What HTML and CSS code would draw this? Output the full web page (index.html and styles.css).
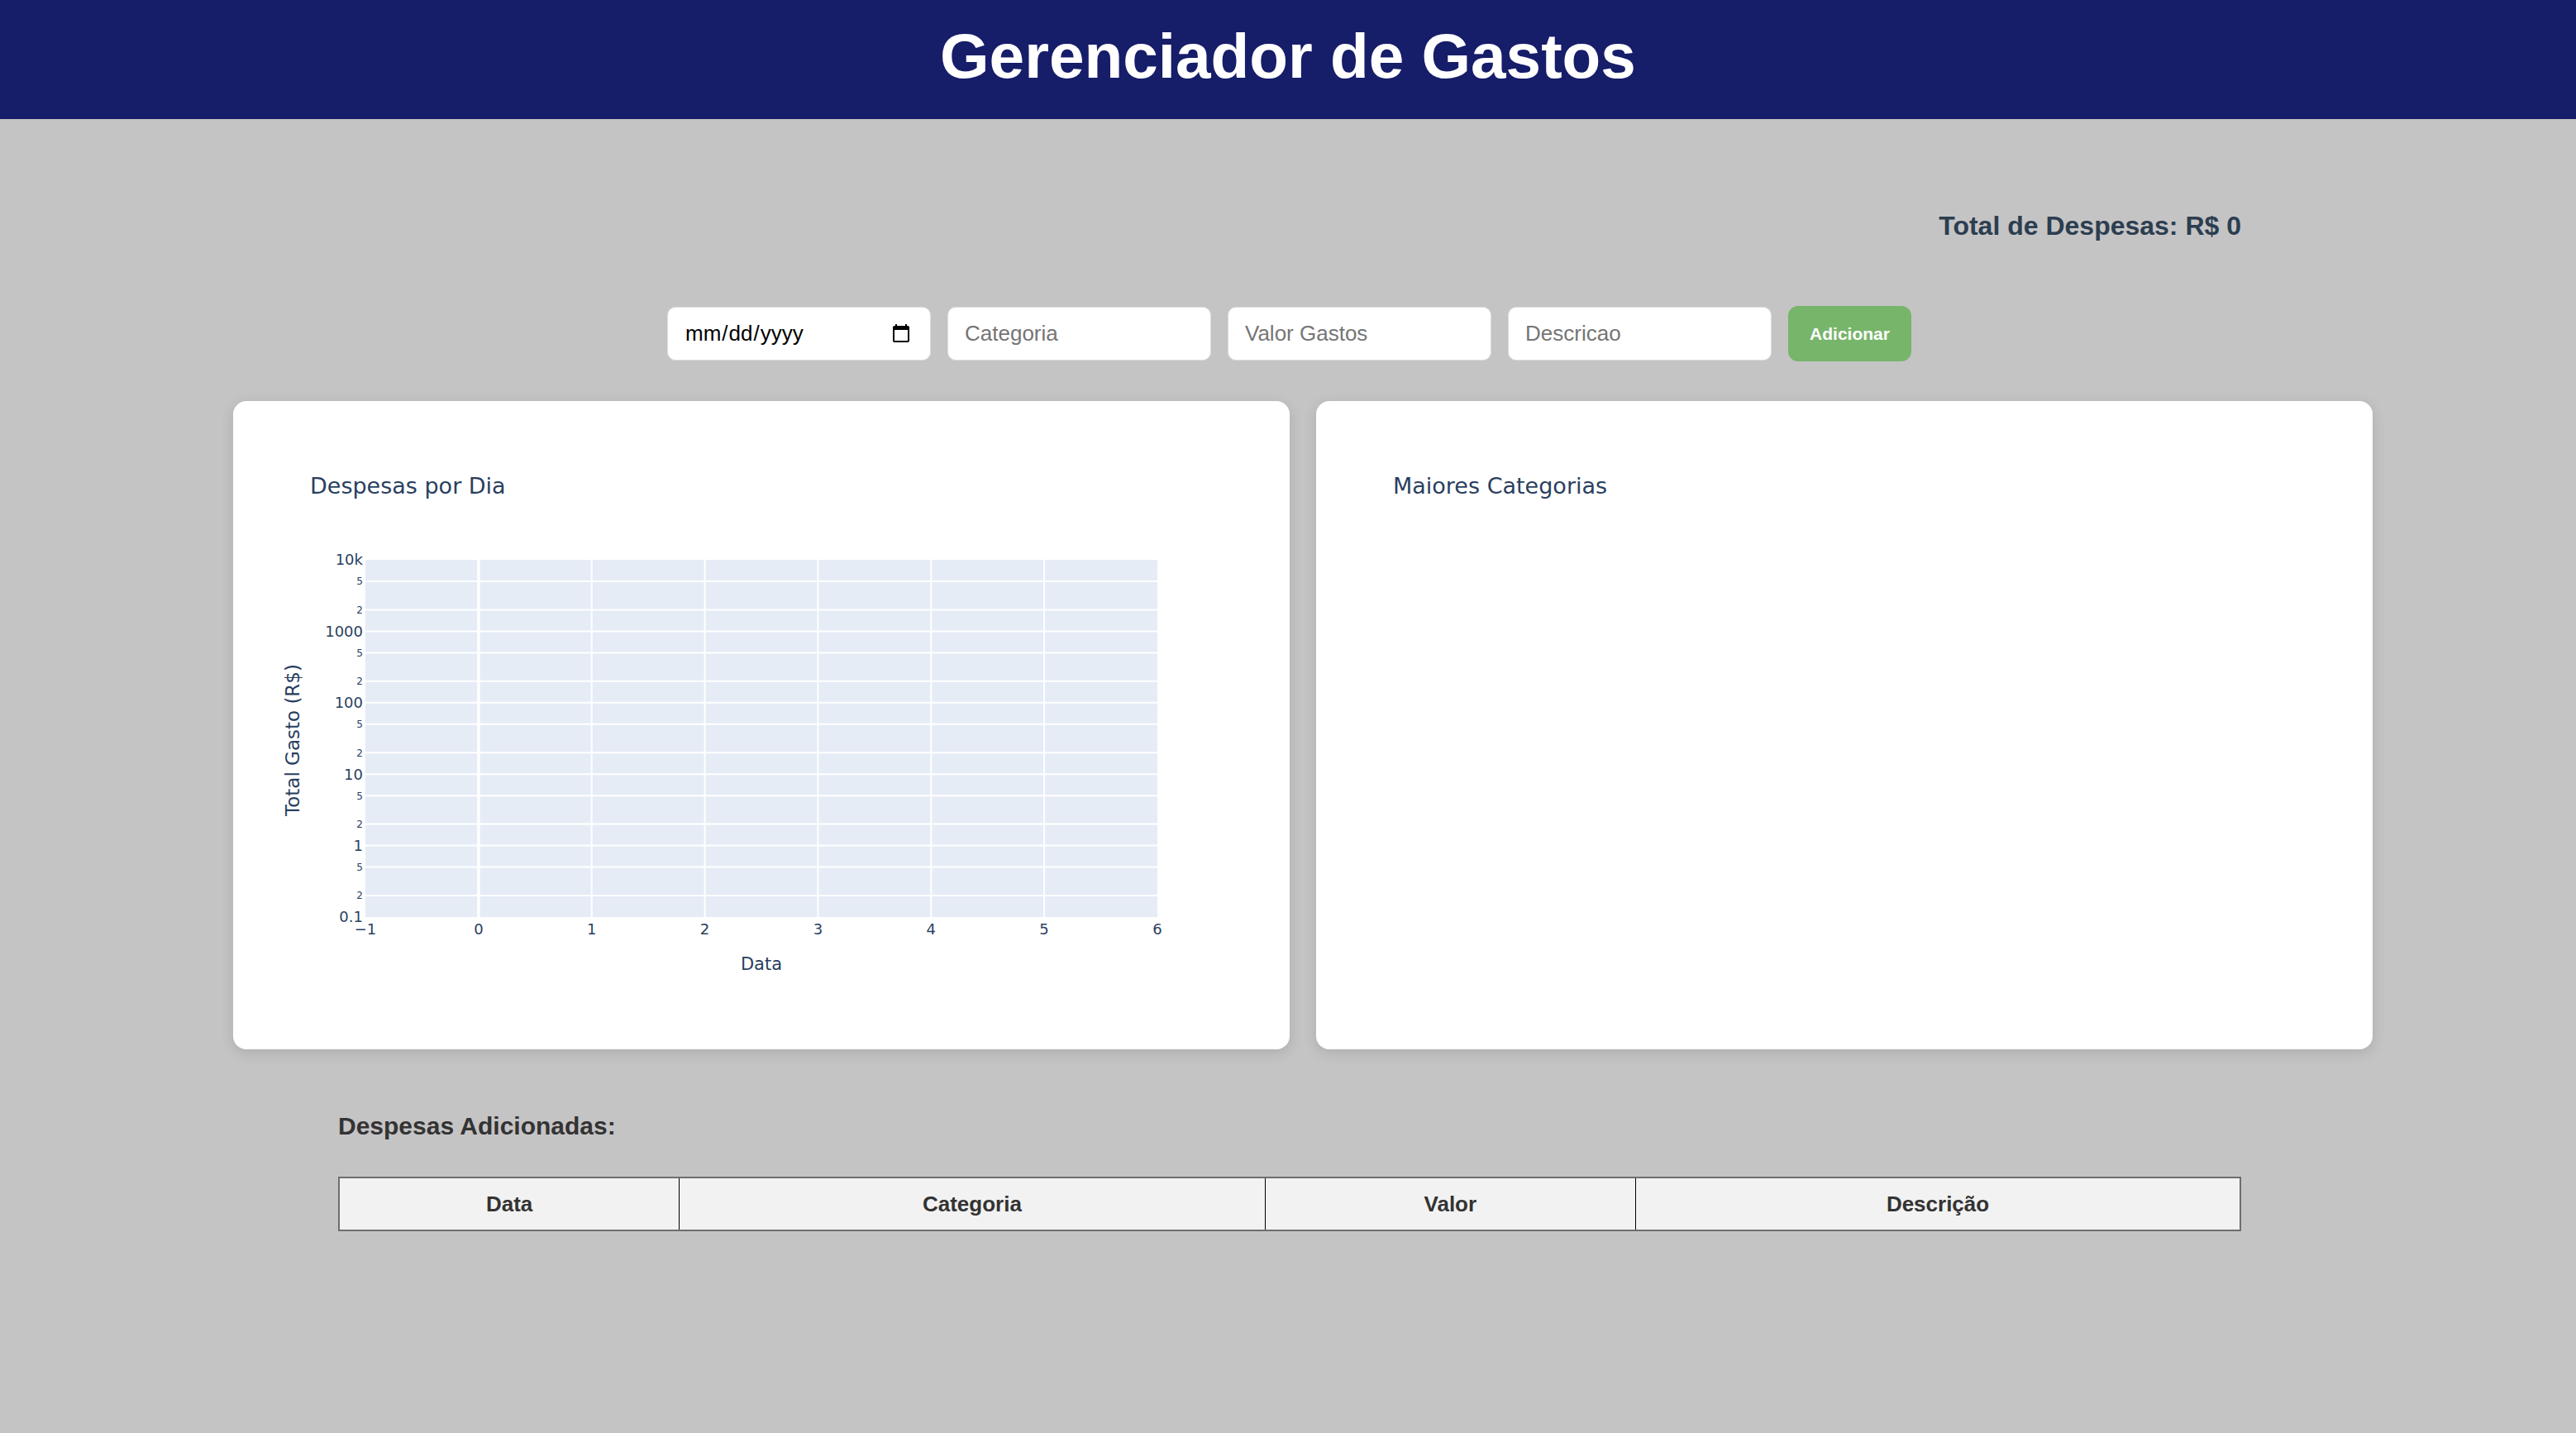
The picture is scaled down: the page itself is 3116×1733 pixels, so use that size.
FILE: index.html
```html
<!DOCTYPE html>
<html lang="pt-BR">
<head>
<meta charset="utf-8">
<title>Gerenciador de Gastos</title>
<link rel="stylesheet" href="styles.css">
</head>
<body>
<header class="app-header">
  <h1 class="app-title">Gerenciador de Gastos</h1>
</header>

<main>
  <div class="content summary">
    <p class="total">Total de Despesas: R$ <span class="total-value">0</span></p>
  </div>

  <form class="expense-form">
    <input class="field" type="date">
    <input class="field" type="text" placeholder="Categoria">
    <input class="field" type="text" placeholder="Valor Gastos">
    <input class="field" type="text" placeholder="Descricao">
    <button class="add-btn" type="button">Adicionar</button>
  </form>

  <section class="charts">
    <div class="card">
      <svg class="plot" viewBox="0 0 1278 784" width="1278" height="784">
        <text class="plot-title" x="93" y="112">Despesas por Dia</text>
        <rect x="160" y="192" width="958" height="432" fill="#e5ecf6"/>
        <g stroke="#fff" stroke-width="2">
          <line x1="160" x2="1118" y1="598" y2="598"/>
          <line x1="160" x2="1118" y1="563.6" y2="563.6"/>
          <line x1="160" x2="1118" y1="537.6" y2="537.6"/>
          <line x1="160" x2="1118" y1="511.6" y2="511.6"/>
          <line x1="160" x2="1118" y1="477.2" y2="477.2"/>
          <line x1="160" x2="1118" y1="451.2" y2="451.2"/>
          <line x1="160" x2="1118" y1="425.2" y2="425.2"/>
          <line x1="160" x2="1118" y1="390.8" y2="390.8"/>
          <line x1="160" x2="1118" y1="364.8" y2="364.8"/>
          <line x1="160" x2="1118" y1="338.8" y2="338.8"/>
          <line x1="160" x2="1118" y1="304.4" y2="304.4"/>
          <line x1="160" x2="1118" y1="278.4" y2="278.4"/>
          <line x1="160" x2="1118" y1="252.4" y2="252.4"/>
          <line x1="160" x2="1118" y1="218" y2="218"/>
          <line x1="433.7" x2="433.7" y1="192" y2="624"/>
          <line x1="570.6" x2="570.6" y1="192" y2="624"/>
          <line x1="707.4" x2="707.4" y1="192" y2="624"/>
          <line x1="844.3" x2="844.3" y1="192" y2="624"/>
          <line x1="981.1" x2="981.1" y1="192" y2="624"/>
        </g>
        <line x1="296.9" x2="296.9" y1="192" y2="624" stroke="#fff" stroke-width="3.5"/>
        <g class="tick-major" text-anchor="end">
          <text x="157" y="192" dy="0.36em">10k</text>
          <text x="157" y="278.4" dy="0.36em">1000</text>
          <text x="157" y="364.8" dy="0.36em">100</text>
          <text x="157" y="451.2" dy="0.36em">10</text>
          <text x="157" y="537.6" dy="0.36em">1</text>
          <text x="157" y="624" dy="0.36em">0.1</text>
        </g>
        <g class="tick-minor" text-anchor="end">
          <text x="157" y="218" dy="0.36em">5</text>
          <text x="157" y="252.4" dy="0.36em">2</text>
          <text x="157" y="304.4" dy="0.36em">5</text>
          <text x="157" y="338.8" dy="0.36em">2</text>
          <text x="157" y="390.8" dy="0.36em">5</text>
          <text x="157" y="425.2" dy="0.36em">2</text>
          <text x="157" y="477.2" dy="0.36em">5</text>
          <text x="157" y="511.6" dy="0.36em">2</text>
          <text x="157" y="563.6" dy="0.36em">5</text>
          <text x="157" y="598" dy="0.36em">2</text>
        </g>
        <g class="tick-major" text-anchor="middle">
          <text x="160" y="645">&#8722;1</text>
          <text x="296.9" y="645">0</text>
          <text x="433.7" y="645">1</text>
          <text x="570.6" y="645">2</text>
          <text x="707.4" y="645">3</text>
          <text x="844.3" y="645">4</text>
          <text x="981.1" y="645">5</text>
          <text x="1118" y="645">6</text>
        </g>
        <text class="axis-title" x="639" y="688" text-anchor="middle">Data</text>
        <text class="axis-title axis-title-y" transform="translate(80 410) rotate(-90)" text-anchor="middle">Total Gasto (R$)</text>
      </svg>
    </div>
    <div class="card">
      <svg class="plot" viewBox="0 0 1278 784" width="1278" height="784">
        <text class="plot-title" x="93" y="112">Maiores Categorias</text>
      </svg>
    </div>
  </section>

  <section class="content expenses">
    <h3 class="section-title">Despesas Adicionadas:</h3>
    <table class="expense-table">
      <colgroup>
        <col class="col-date">
        <col class="col-cat">
        <col class="col-val">
        <col class="col-desc">
      </colgroup>
      <thead>
        <tr>
          <th>Data</th>
          <th>Categoria</th>
          <th>Valor</th>
          <th>Descrição</th>
        </tr>
      </thead>
      <tbody></tbody>
    </table>
  </section>
</main>
</body>
</html>
```

FILE: styles.css
```css
body {
  margin: 0;
  background: #c5c4c5;
  font-family: "Liberation Sans", Arial, sans-serif;
}

.app-header {
  background: #161d69;
  height: 144px;
}

.app-title {
  margin: 0;
  color: #ffffff;
  font-size: 76.5px;
  font-weight: 700;
  text-align: center;
  line-height: 136px;
  padding-bottom: 8px;
}

.content {
  width: 2302px;
  margin: 0 auto;
  padding-left: 4px;
}

.summary {
  padding-top: 109px;
  text-align: right;
}

.total {
  margin: 0;
  font-size: 32px;
  font-weight: 700;
  line-height: 40px;
  color: #2c3e50;
}

.expense-form {
  display: flex;
  justify-content: center;
  align-items: center;
  gap: 20px;
  margin-top: 77px;
  padding-left: 3px;
}

.field {
  box-sizing: border-box;
  width: 319px;
  height: 65px;
  padding: 0 20px;
  border: 1px solid #dcdcdc;
  border-radius: 10px;
  background: #ffffff;
  font-family: "Liberation Sans", Arial, sans-serif;
  font-size: 26px;
  color: #000000;
  outline: none;
}

.field::placeholder {
  color: #757575;
}

.add-btn {
  width: 149px;
  height: 67px;
  border: none;
  border-radius: 12px;
  background: #77b56a;
  color: #ffffff;
  font-family: "Liberation Sans", Arial, sans-serif;
  font-size: 21px;
  font-weight: 700;
  cursor: pointer;
}

.charts {
  display: flex;
  justify-content: center;
  gap: 32px;
  padding-left: 36px;
  margin-top: 48px;
}

.card {
  width: 1278px;
  height: 784px;
  background: #ffffff;
  border-radius: 16px;
  box-shadow: 0 4px 16px rgba(0, 0, 0, 0.12);
  overflow: hidden;
}

.plot {
  display: block;
}

.plot text {
  font-family: "DejaVu Sans", Verdana, sans-serif;
  fill: #2a3f5f;
}

.plot .plot-title {
  font-size: 27px;
}

.plot .tick-major text {
  font-size: 18px;
}

.plot .tick-minor text {
  font-size: 12px;
}

.plot .axis-title {
  font-size: 21px;
}

.plot .axis-title-y {
  font-size: 23px;
}

.expenses {
  margin-top: 75px;
  padding-bottom: 60px;
}

.section-title {
  margin: 0;
  font-size: 30px;
  font-weight: 700;
  line-height: 36px;
  color: #333333;
}

.expense-table {
  width: 100%;
  margin-top: 43px;
  border-collapse: collapse;
  border: 2px solid #6e6e6e;
}

.col-date { width: 17.9%; }
.col-cat { width: 30.8%; }
.col-val { width: 19.5%; }
.col-desc { width: 31.8%; }

.expense-table th {
  background: #f2f2f2;
  border: 1px solid #000000;
  padding: 16px;
  font-size: 26px;
  line-height: 30px;
  font-weight: 700;
  color: #333333;
  text-align: center;
}
```
